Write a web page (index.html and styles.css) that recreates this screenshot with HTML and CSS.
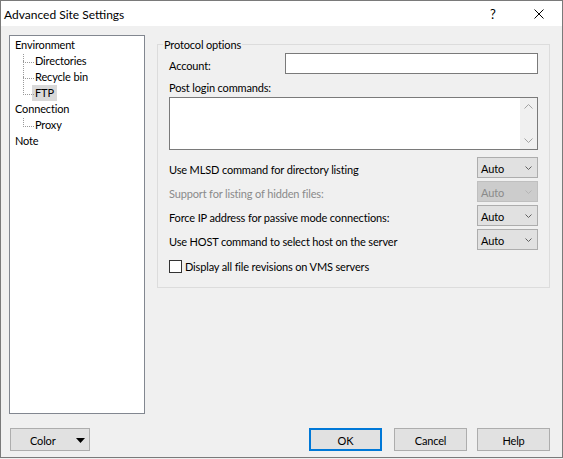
FILE: index.html
```html
<!DOCTYPE html>
<html>
<head>
<meta charset="utf-8">
<link rel="stylesheet" href="styles.css">
</head>
<body>
<div class="window">
  <div class="titlebar">
    <span class="title">Advanced Site Settings</span>
    <span class="cap-btn cap-help">?</span>
    <span class="cap-btn cap-close">
      <svg width="10" height="10" viewBox="0 0 10 10"><path d="M0.5 0.5 L9.5 9.5 M9.5 0.5 L0.5 9.5" stroke="#000" stroke-width="1" fill="none"/></svg>
    </span>
  </div>
  <div class="main">
    <div class="tree">
      <div class="node root"><span class="lbl">Environment</span></div>
      <div class="node child first"><span class="lbl">Directories</span></div>
      <div class="node child"><span class="lbl">Recycle bin</span></div>
      <div class="node child sel"><span class="lbl">FTP</span></div>
      <div class="node root"><span class="lbl">Connection</span></div>
      <div class="node child first"><span class="lbl">Proxy</span></div>
      <div class="node root"><span class="lbl">Note</span></div>
    </div>
    <div class="panel">
      <div class="group">
        <span class="group-label">Protocol options</span>
        <div class="row">
          <span class="row-label">Account:</span>
          <div class="input"></div>
        </div>
        <div class="post-label">Post login commands:</div>
        <div class="textarea">
          <div class="vscroll">
            <span class="arrow">
              <svg width="9" height="5" viewBox="0 0 9 5"><path d="M0.5 4.5 L4.5 0.5 L8.5 4.5" stroke="#a3a3a3" stroke-width="1" fill="none"/></svg>
            </span>
            <span class="arrow">
              <svg width="9" height="5" viewBox="0 0 9 5"><path d="M0.5 0.5 L4.5 4.5 L8.5 0.5" stroke="#a3a3a3" stroke-width="1" fill="none"/></svg>
            </span>
          </div>
        </div>
        <div class="combos">
          <div class="row">
            <span class="row-label">Use MLSD command for directory listing</span>
            <div class="combo"><span>Auto</span><svg class="chev" width="7" height="4" viewBox="0 0 7 4"><path d="M0.5 0.5 L3.5 3.5 L6.5 0.5" stroke="#606060" stroke-width="1" fill="none"/></svg></div>
          </div>
          <div class="row">
            <span class="row-label disabled">Support for listing of hidden files:</span>
            <div class="combo disabled"><span>Auto</span><svg class="chev" width="7" height="4" viewBox="0 0 7 4"><path d="M0.5 0.5 L3.5 3.5 L6.5 0.5" stroke="#b5b5b5" stroke-width="1" fill="none"/></svg></div>
          </div>
          <div class="row">
            <span class="row-label">Force IP address for passive mode connections:</span>
            <div class="combo"><span>Auto</span><svg class="chev" width="7" height="4" viewBox="0 0 7 4"><path d="M0.5 0.5 L3.5 3.5 L6.5 0.5" stroke="#606060" stroke-width="1" fill="none"/></svg></div>
          </div>
          <div class="row">
            <span class="row-label">Use HOST command to select host on the server</span>
            <div class="combo"><span>Auto</span><svg class="chev" width="7" height="4" viewBox="0 0 7 4"><path d="M0.5 0.5 L3.5 3.5 L6.5 0.5" stroke="#606060" stroke-width="1" fill="none"/></svg></div>
          </div>
        </div>
        <div class="check-row">
          <span class="checkbox"></span>
          <span class="check-label">Display all file revisions on VMS servers</span>
        </div>
      </div>
    </div>
  </div>
  <div class="footer">
    <div class="btn color-btn"><span>Color</span><svg class="tri" width="9" height="5" viewBox="0 0 9 5"><path d="M0 0 L9 0 L4.5 5 Z" fill="#000"/></svg></div>
    <div class="spacer"></div>
    <div class="btn ok">OK</div>
    <div class="btn cancel">Cancel</div>
    <div class="btn help">Help</div>
  </div>
</div>
</body>
</html>
```

FILE: styles.css
```css
* { box-sizing: border-box; }
html, body { margin: 0; padding: 0; }
body {
  width: 563px;
  height: 459px;
  overflow: hidden;
  background: #f0f0f0;
  font-family: Lato, "Liberation Sans", sans-serif;
  font-size: 11px;
  letter-spacing: -0.15px;
  color: #000;
}
.window {
  width: 563px;
  height: 458px;
  border: 1px solid #7a7a7a;
  background: #f0f0f0;
  display: flex;
  flex-direction: column;
}
.titlebar {
  height: 25px;
  flex: none;
  background: #fff;
  display: flex;
  align-items: center;
  padding-left: 3px;
  font-size: 12px;
  letter-spacing: 0;
}
.title { flex: 1; padding-top: 1px; }
.cap-btn {
  width: 46px;
  height: 25px;
  display: flex;
  align-items: center;
  justify-content: center;
}
.cap-help { font-size: 13px; padding-top: 1px; }

.main {
  display: flex;
  padding: 9px 0 0 8px;
}
.tree {
  width: 136px;
  height: 379px;
  border: 1px solid #828790;
  background: #fff;
  padding-top: 1px;
}
.node {
  height: 16px;
  line-height: 16px;
  position: relative;
  white-space: nowrap;
}
.node .lbl { display: inline-block; height: 16px; }
.node.root { padding-left: 5px; }
.node.child { padding-left: 22px; }
.node.child .lbl { padding: 0 3px; }
.node.sel .lbl { background: #d9d9d9; }
.node.child::before {
  content: "";
  position: absolute;
  left: 13px;
  top: -8px;
  width: 10px;
  height: 17px;
  border-left: 1px dotted #9a9a9a;
  border-bottom: 1px dotted #9a9a9a;
}
.node.child.first::before { top: 1px; height: 8px; }

.panel { margin-left: 12px; margin-top: 9px; }
.group {
  width: 393px;
  height: 244px;
  border: 1px solid #dcdcdc;
  position: relative;
  padding: 8px 11px 0 11px;
}
.group-label {
  position: absolute;
  top: -8px;
  left: 5px;
  padding: 0 1px;
  line-height: 16px;
  background: #f0f0f0;
}
.row {
  display: flex;
  align-items: center;
  height: 21px;
}
.row-label { flex: 1; padding-top: 4px; white-space: nowrap; }
.row-label.disabled { color: #8a8a8a; }
.input {
  width: 253px;
  height: 21px;
  border: 1px solid #7a7a7a;
  background: #fff;
}
.post-label { margin-top: 6px; line-height: 16px; }
.textarea {
  margin-top: 1px;
  height: 53px;
  border: 1px solid #7a7a7a;
  background: #fff;
  display: flex;
  justify-content: flex-end;
}
.vscroll {
  width: 17px;
  background: #f0f0f0;
  display: flex;
  flex-direction: column;
  justify-content: space-between;
}
.arrow {
  height: 17px;
  display: flex;
  align-items: center;
  justify-content: center;
}
.combos {
  margin-top: 7px;
  display: flex;
  flex-direction: column;
  gap: 3px;
}
.combo {
  width: 61px;
  height: 21px;
  border: 1px solid #adadad;
  background: #e1e1e1;
  display: flex;
  align-items: center;
  justify-content: space-between;
  padding: 1px 5px 0 3px;
}
.combo.disabled {
  background: #cccccc;
  border-color: #bfbfbf;
  color: #8a8a8a;
}
.check-row {
  margin-top: 8px;
  height: 16px;
  display: flex;
  align-items: center;
  gap: 3px;
}
.checkbox {
  width: 13px;
  height: 13px;
  border: 1px solid #333;
  background: #fff;
}
.check-label { padding-top: 1px; }

.footer {
  display: flex;
  margin-top: 14px;
  padding: 0 12px 0 9px;
}
.btn {
  height: 23px;
  border: 1px solid #adadad;
  background: #e1e1e1;
  display: flex;
  align-items: center;
  justify-content: center;
  padding-top: 1px;
}
.color-btn {
  width: 80px;
  justify-content: flex-start;
  padding-left: 19px;
}
.color-btn .tri { margin-left: auto; margin-right: 4px; }
.spacer { flex: 1; }
.ok { width: 73px; border: 2px solid #0078d7; margin-right: 12px; }
.cancel { width: 73px; margin-right: 10px; }
.help { width: 73px; }
```
